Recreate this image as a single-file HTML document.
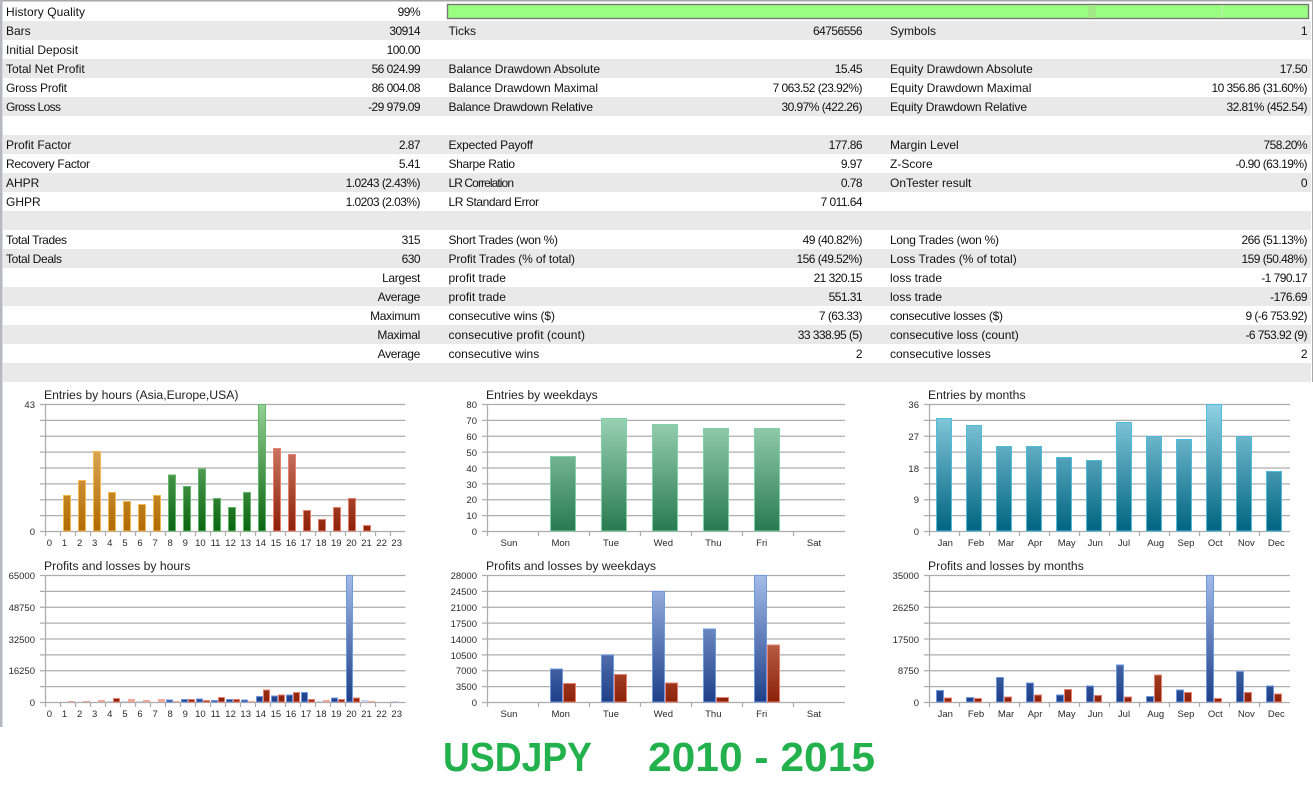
<!DOCTYPE html>
<html><head><meta charset="utf-8"><style>
html,body{margin:0;padding:0;background:#fff;width:1313px;height:798px;overflow:hidden}
svg{display:block;font-family:"Liberation Sans",sans-serif}
.t text{font-size:12px;fill:#111}
.e{text-anchor:end}
.t .e{letter-spacing:-.55px}
.t .w{letter-spacing:-.3px}
.ti{font-size:12.2px;fill:#222}
.l text{font-size:9.5px;fill:#2a2a2a}
.c{text-anchor:middle}
.g{fill:none;stroke:#adadad;stroke-width:1.25}
</style></head><body>
<svg width="1313" height="798" viewBox="0 0 1313 798" xmlns="http://www.w3.org/2000/svg">
<defs>
<linearGradient id="or" gradientUnits="userSpaceOnUse" x1="0" y1="404" x2="0" y2="531"><stop offset="0" stop-color="#f0c888"/><stop offset="1" stop-color="#b06a00"/></linearGradient>
<linearGradient id="gr" gradientUnits="userSpaceOnUse" x1="0" y1="404" x2="0" y2="531"><stop offset="0" stop-color="#96d096"/><stop offset="1" stop-color="#0a6410"/></linearGradient>
<linearGradient id="rd" gradientUnits="userSpaceOnUse" x1="0" y1="404" x2="0" y2="531"><stop offset="0" stop-color="#e8a090"/><stop offset="1" stop-color="#8c2208"/></linearGradient>
<linearGradient id="wk" gradientUnits="userSpaceOnUse" x1="0" y1="404" x2="0" y2="531"><stop offset="0" stop-color="#a8dcc0"/><stop offset="1" stop-color="#287a50"/></linearGradient>
<linearGradient id="te" gradientUnits="userSpaceOnUse" x1="0" y1="404" x2="0" y2="531"><stop offset="0" stop-color="#90d2e4"/><stop offset="1" stop-color="#006480"/></linearGradient>
<linearGradient id="bl" gradientUnits="userSpaceOnUse" x1="0" y1="575" x2="0" y2="702"><stop offset="0" stop-color="#a4bce8"/><stop offset="1" stop-color="#1e3f88"/></linearGradient>
<linearGradient id="rp" gradientUnits="userSpaceOnUse" x1="0" y1="575" x2="0" y2="702"><stop offset="0" stop-color="#e8a090"/><stop offset="1" stop-color="#8c2208"/></linearGradient>
</defs>

<rect x="0" y="0" width="1313" height="1.5" fill="#a8a8a8"/>
<rect x="0" y="0" width="2.5" height="727" fill="#b4b8c0"/>
<rect x="1312" y="0" width="1" height="382" fill="#a8a8a8"/>
<g fill="#e9e9e9">
<rect x="3" y="21" width="1308" height="19"/><rect x="3" y="59" width="1308" height="19"/><rect x="3" y="97" width="1308" height="19"/><rect x="3" y="135" width="1308" height="19"/><rect x="3" y="173" width="1308" height="19"/><rect x="3" y="211" width="1308" height="19"/><rect x="3" y="249" width="1308" height="19"/><rect x="3" y="287" width="1308" height="19"/><rect x="3" y="325" width="1308" height="19"/><rect x="3" y="363" width="1308" height="19"/>
</g>

<rect x="447.5" y="4.5" width="861" height="14" fill="#99ff80" stroke="#777" stroke-width="1.4"/>
<rect x="1088" y="5" width="8" height="13" fill="#a2e884"/>
<rect x="1221.5" y="5" width="1" height="13" fill="#c8e8c0"/>

<g class="t">
<text x="6" y="16" textLength="79">History Quality</text><text class="e" x="420" y="16">99%</text>
<text x="6" y="35">Bars</text><text class="e" x="420" y="35">30914</text><text x="448.5" y="35">Ticks</text><text class="e" x="862" y="35">64756556</text><text x="890" y="35">Symbols</text><text class="e" x="1307" y="35">1</text>
<text x="6" y="54">Initial Deposit</text><text class="e" x="420" y="54">100.00</text>
<text x="6" y="73">Total Net Profit</text><text class="e" x="420" y="73">56 024.99</text><text x="448.5" y="73" textLength="151.5">Balance Drawdown Absolute</text><text class="e" x="862" y="73">15.45</text><text x="890" y="73">Equity Drawdown Absolute</text><text class="e" x="1307" y="73">17.50</text>
<text x="6" y="92" textLength="61">Gross Profit</text><text class="e" x="420" y="92">86 004.08</text><text x="448.5" y="92" textLength="149.5">Balance Drawdown Maximal</text><text class="e" x="862" y="92">7 063.52 (23.92%)</text><text x="890" y="92">Equity Drawdown Maximal</text><text class="e" x="1307" y="92">10 356.86 (31.60%)</text>
<text x="6" y="111" textLength="55">Gross Loss</text><text class="e" x="420" y="111">-29 979.09</text><text x="448.5" y="111" textLength="144.5">Balance Drawdown Relative</text><text class="e" x="862" y="111">30.97% (422.26)</text><text x="890" y="111" textLength="137">Equity Drawdown Relative</text><text class="e" x="1307" y="111">32.81% (452.54)</text>
<text x="6" y="149">Profit Factor</text><text class="e" x="420" y="149">2.87</text><text x="448.5" y="149" textLength="84.5">Expected Payoff</text><text class="e" x="862" y="149">177.86</text><text x="890" y="149">Margin Level</text><text class="e" x="1307" y="149">758.20%</text>
<text x="6" y="168" textLength="84">Recovery Factor</text><text class="e" x="420" y="168">5.41</text><text x="448.5" y="168" textLength="66.5">Sharpe Ratio</text><text class="e" x="862" y="168">9.97</text><text x="890" y="168">Z-Score</text><text class="e" x="1307" y="168">-0.90 (63.19%)</text>
<text x="6" y="187">AHPR</text><text class="e" x="420" y="187">1.0243 (2.43%)</text><text x="448.5" y="187" textLength="65.5">LR Correlation</text><text class="e" x="862" y="187">0.78</text><text x="890" y="187">OnTester result</text><text class="e" x="1307" y="187">0</text>
<text x="6" y="206">GHPR</text><text class="e" x="420" y="206">1.0203 (2.03%)</text><text x="448.5" y="206" textLength="90.5">LR Standard Error</text><text class="e" x="862" y="206">7 011.64</text>
<text x="6" y="244" textLength="61">Total Trades</text><text class="e" x="420" y="244">315</text><text x="448.5" y="244" textLength="109.5">Short Trades (won %)</text><text class="e" x="862" y="244">49 (40.82%)</text><text x="890" y="244" textLength="109">Long Trades (won %)</text><text class="e" x="1307" y="244">266 (51.13%)</text>
<text x="6" y="263" textLength="56">Total Deals</text><text class="e" x="420" y="263">630</text><text x="448.5" y="263" textLength="126.5">Profit Trades (% of total)</text><text class="e" x="862" y="263">156 (49.52%)</text><text x="890" y="263">Loss Trades (% of total)</text><text class="e" x="1307" y="263">159 (50.48%)</text>
<text class="e w" x="420" y="282">Largest</text><text x="448.5" y="282">profit trade</text><text class="e" x="862" y="282">21 320.15</text><text x="890" y="282">loss trade</text><text class="e" x="1307" y="282">-1 790.17</text>
<text class="e w" x="420" y="301">Average</text><text x="448.5" y="301">profit trade</text><text class="e" x="862" y="301">551.31</text><text x="890" y="301">loss trade</text><text class="e" x="1307" y="301">-176.69</text>
<text class="e w" x="420" y="320">Maximum</text><text x="448.5" y="320" textLength="106.5">consecutive wins ($)</text><text class="e" x="862" y="320">7 (63.33)</text><text x="890" y="320" textLength="113">consecutive losses ($)</text><text class="e" x="1307" y="320">9 (-6 753.92)</text>
<text class="e w" x="420" y="339">Maximal</text><text x="448.5" y="339" textLength="136.5">consecutive profit (count)</text><text class="e" x="862" y="339">33 338.95 (5)</text><text x="890" y="339">consecutive loss (count)</text><text class="e" x="1307" y="339">-6 753.92 (9)</text>
<text class="e w" x="420" y="358">Average</text><text x="448.5" y="358">consecutive wins</text><text class="e" x="862" y="358">2</text><text x="890" y="358">consecutive losses</text><text class="e" x="1307" y="358">2</text>
</g>

<!-- Grids -->
<path class="g" d="M40 404.5H405.5M40 420.4H405.5M40 436.25H405.5M40 452.1H405.5M40 468H405.5M40 483.9H405.5M40 499.75H405.5M40 515.6H405.5M40 531.5H405.5M45.5 404V536M60.5 531V536M75.5 531V536M90.5 531V536M105.5 531V536M120.5 531V536M135.5 531V536M150.5 531V536M165.5 531V536M180.5 531V536M195.5 531V536M210.5 531V536M225.5 531V536M240.5 531V536M255.5 531V536M270.5 531V536M285.5 531V536M300.5 531V536M315.5 531V536M330.5 531V536M345.5 531V536M360.5 531V536M375.5 531V536M390.5 531V536"/>
<path class="g" d="M482 404.5H845M482 420.4H845M482 436.25H845M482 452.1H845M482 468H845M482 483.9H845M482 499.75H845M482 515.6H845M482 531.5H845M487.5 404V536M538.5 531V536M589.5 531V536M640.5 531V536M691.5 531V536M742.5 531V536M793.5 531V536"/>
<path class="g" d="M924 404.5H1290M924 420.4H1290M924 436.25H1290M924 452.1H1290M924 468H1290M924 483.9H1290M924 499.75H1290M924 515.6H1290M924 531.5H1290M929.5 404V536M959.5 531V536M989.5 531V536M1019.5 531V536M1049.5 531V536M1079.5 531V536M1109.5 531V536M1139.5 531V536M1169.5 531V536M1199.5 531V536M1229.5 531V536M1259.5 531V536"/>
<path class="g" d="M40 575.5H405.5M40 591.4H405.5M40 607.25H405.5M40 623.1H405.5M40 639H405.5M40 654.9H405.5M40 670.75H405.5M40 686.6H405.5M40 702.5H405.5M45.5 575V707M60.5 702V707M75.5 702V707M90.5 702V707M105.5 702V707M120.5 702V707M135.5 702V707M150.5 702V707M165.5 702V707M180.5 702V707M195.5 702V707M210.5 702V707M225.5 702V707M240.5 702V707M255.5 702V707M270.5 702V707M285.5 702V707M300.5 702V707M315.5 702V707M330.5 702V707M345.5 702V707M360.5 702V707M375.5 702V707M390.5 702V707"/>
<path class="g" d="M482 575.5H845M482 591.4H845M482 607.25H845M482 623.1H845M482 639H845M482 654.9H845M482 670.75H845M482 686.6H845M482 702.5H845M487.5 575V707M538.5 702V707M589.5 702V707M640.5 702V707M691.5 702V707M742.5 702V707M793.5 702V707"/>
<path class="g" d="M924 575.5H1290M924 591.4H1290M924 607.25H1290M924 623.1H1290M924 639H1290M924 654.9H1290M924 670.75H1290M924 686.6H1290M924 702.5H1290M929.5 575V707M959.5 702V707M989.5 702V707M1019.5 702V707M1049.5 702V707M1079.5 702V707M1109.5 702V707M1139.5 702V707M1169.5 702V707M1199.5 702V707M1229.5 702V707M1259.5 702V707"/>

<!-- Bars: Entries by hours -->
<path fill="url(#or)" stroke="#f8b850" d="M63.5 531V495.5h7V531zM78.5 531V480.5h7V531zM93.5 531V451.5h7V531zM108.5 531V492.5h7V531zM123.5 531V501.5h7V531zM138.5 531V504.5h7V531zM153.5 531V495.5h7V531z"/>
<path fill="url(#gr)" stroke="#60b868" d="M168.5 531V475h7V531zM183.5 531V486.5h7V531zM198.5 531V469h7V531zM213.5 531V498.5h7V531zM228.5 531V507.5h7V531zM243.5 531V492.5h7V531zM258.5 531V404.5h7V531z"/>
<path fill="url(#rd)" stroke="#e88070" d="M273.5 531V448.5h7V531zM288.5 531V454.5h7V531zM303.5 531V510.5h7V531zM318.5 531V519.5h7V531zM333.5 531V507.5h7V531zM348.5 531V498.5h7V531zM363.5 531V525.5h7V531z"/>
<!-- Entries by weekdays -->
<path fill="url(#wk)" stroke="#80d0a8" d="M550.5 531V456.5h25V531zM601.5 531V418.5h25V531zM652.5 531V424.5h25V531zM703.5 531V428.5h25V531zM754.5 531V428.5h25V531z"/>
<!-- Entries by months -->
<path fill="url(#te)" stroke="#50bcdc" d="M936.5 531V418.5h15V531zM966.5 531V425.5h15V531zM996.5 531V446.5h15V531zM1026.5 531V446.5h15V531zM1056.5 531V457.5h15V531zM1086.5 531V460.5h15V531zM1116.5 531V422.5h15V531zM1146.5 531V436.5h15V531zM1176.5 531V439.5h15V531zM1206.5 531V404.5h15V531zM1236.5 531V436.5h15V531zM1266.5 531V471.5h15V531z"/>
<!-- P&L by hours: tiny bars -->
<path fill="#c8d6f2" d="M106 701h7v1h-7zM121 701h7v1h-7zM136 701h7v1h-7zM316 701h7v1h-7zM391 701h7v1h-7zM361 700h7v2h-7z"/>
<path fill="#f2a898" d="M68 701h7v1h-7zM83 701h7v1h-7zM98 700h7v2h-7zM173 701h7v1h-7zM248 701h7v1h-7zM368 701h7v1h-7zM143 700h7v2h-7zM158 699h7v3h-7zM323 700h7v2h-7zM128 699h7v3h-7z"/>
<!-- P&L by hours -->
<path fill="url(#bl)" stroke="#7098e0" d="M166.5 702V700h6V702zM181.5 702V699.5h6V702zM196.5 702V699h6V702zM211.5 702V700.5h6V702zM226.5 702V699.5h6V702zM241.5 702V700h6V702zM256.5 702V696.5h6V702zM271.5 702V696h6V702zM286.5 702V695h6V702zM301.5 702V692.5h6V702zM331.5 702V698h6V702zM346.5 702V575.5h6V702z"/>
<path fill="url(#rp)" stroke="#e88070" d="M113.5 702V698.5h6V702zM188.5 702V699.5h6V702zM203.5 702V700.5h6V702zM218.5 702V697.5h6V702zM233.5 702V699.5h6V702zM263.5 702V690h6V702zM278.5 702V695h6V702zM293.5 702V692.5h6V702zM308.5 702V699.5h6V702zM338.5 702V699.5h6V702zM353.5 702V698h6V702z"/>
<!-- P&L by weekdays -->
<path fill="url(#bl)" stroke="#7098e0" d="M550.5 702V669h12V702zM601.5 702V655h12V702zM652.5 702V591.5h12V702zM703.5 702V629h12V702zM754.5 702V575.5h12V702z"/>
<path fill="url(#rp)" stroke="#e88070" d="M563.5 702V683.5h12V702zM614.5 702V674.5h12V702zM665.5 702V683h12V702zM716.5 702V697.5h12V702zM767.5 702V645h12V702z"/>
<!-- P&L by months -->
<path fill="url(#bl)" stroke="#7098e0" d="M936.5 702V690.5h7V702zM966.5 702V697.5h7V702zM996.5 702V677.5h7V702zM1026.5 702V683h7V702zM1056.5 702V695h7V702zM1086.5 702V686h7V702zM1116.5 702V665h7V702zM1146.5 702V696.5h7V702zM1176.5 702V690h7V702zM1206.5 702V575.5h7V702zM1236.5 702V671.5h7V702zM1266.5 702V686h7V702z"/>
<path fill="url(#rp)" stroke="#e88070" d="M944.5 702V698h7V702zM974.5 702V698.5h7V702zM1004.5 702V697h7V702zM1034.5 702V695h7V702zM1064.5 702V689.5h7V702zM1094.5 702V695.5h7V702zM1124.5 702V697h7V702zM1154.5 702V675h7V702zM1184.5 702V692.5h7V702zM1214.5 702V698.5h7V702zM1244.5 702V692.5h7V702zM1274.5 702V694h7V702z"/>

<!-- Titles -->
<text class="ti" x="44" y="399">Entries by hours (Asia,Europe,USA)</text>
<text class="ti" x="486" y="399">Entries by weekdays</text>
<text class="ti" x="928" y="399">Entries by months</text>
<text class="ti" x="44" y="570">Profits and losses by hours</text>
<text class="ti" x="486" y="570">Profits and losses by weekdays</text>
<text class="ti" x="928" y="570">Profits and losses by months</text>

<!-- Y labels -->
<g class="l">
<text class="e" x="35" y="408">43</text><text class="e" x="35" y="535">0</text>
<text class="e" x="477" y="408">80</text><text class="e" x="477" y="424">70</text><text class="e" x="477" y="440">60</text><text class="e" x="477" y="456">50</text><text class="e" x="477" y="472">40</text><text class="e" x="477" y="488">30</text><text class="e" x="477" y="503">20</text><text class="e" x="477" y="519">10</text><text class="e" x="477" y="535">0</text>
<text class="e" x="919" y="408">36</text><text class="e" x="919" y="440">27</text><text class="e" x="919" y="472">18</text><text class="e" x="919" y="503">9</text><text class="e" x="919" y="535">0</text>
<text class="e" x="35" y="579">65000</text><text class="e" x="35" y="611">48750</text><text class="e" x="35" y="643">32500</text><text class="e" x="35" y="674">16250</text><text class="e" x="35" y="706">0</text>
<text class="e" x="477" y="579">28000</text><text class="e" x="477" y="595">24500</text><text class="e" x="477" y="611">21000</text><text class="e" x="477" y="627">17500</text><text class="e" x="477" y="643">14000</text><text class="e" x="477" y="659">10500</text><text class="e" x="477" y="674">7000</text><text class="e" x="477" y="690">3500</text><text class="e" x="477" y="706">0</text>
<text class="e" x="919" y="579">35000</text><text class="e" x="919" y="611">26250</text><text class="e" x="919" y="643">17500</text><text class="e" x="919" y="674">8750</text><text class="e" x="919" y="706">0</text>
</g>

<!-- X labels -->
<g class="l">
<text class="c" y="546" x="49.4">0</text><text class="c" y="546" x="64.5">1</text><text class="c" y="546" x="79.6">2</text><text class="c" y="546" x="94.7">3</text><text class="c" y="546" x="109.8">4</text><text class="c" y="546" x="124.9">5</text><text class="c" y="546" x="140">6</text><text class="c" y="546" x="155.1">7</text><text class="c" y="546" x="170.2">8</text><text class="c" y="546" x="185.3">9</text><text class="c" y="546" x="200.4">10</text><text class="c" y="546" x="215.5">11</text><text class="c" y="546" x="230.6">12</text><text class="c" y="546" x="245.7">13</text><text class="c" y="546" x="260.8">14</text><text class="c" y="546" x="275.9">15</text><text class="c" y="546" x="291">16</text><text class="c" y="546" x="306.1">17</text><text class="c" y="546" x="321.2">18</text><text class="c" y="546" x="336.3">19</text><text class="c" y="546" x="351.4">20</text><text class="c" y="546" x="366.5">21</text><text class="c" y="546" x="381.6">22</text><text class="c" y="546" x="396.7">23</text>
<text class="c" y="717" x="49.4">0</text><text class="c" y="717" x="64.5">1</text><text class="c" y="717" x="79.6">2</text><text class="c" y="717" x="94.7">3</text><text class="c" y="717" x="109.8">4</text><text class="c" y="717" x="124.9">5</text><text class="c" y="717" x="140">6</text><text class="c" y="717" x="155.1">7</text><text class="c" y="717" x="170.2">8</text><text class="c" y="717" x="185.3">9</text><text class="c" y="717" x="200.4">10</text><text class="c" y="717" x="215.5">11</text><text class="c" y="717" x="230.6">12</text><text class="c" y="717" x="245.7">13</text><text class="c" y="717" x="260.8">14</text><text class="c" y="717" x="275.9">15</text><text class="c" y="717" x="291">16</text><text class="c" y="717" x="306.1">17</text><text class="c" y="717" x="321.2">18</text><text class="c" y="717" x="336.3">19</text><text class="c" y="717" x="351.4">20</text><text class="c" y="717" x="366.5">21</text><text class="c" y="717" x="381.6">22</text><text class="c" y="717" x="396.7">23</text>
<text class="c" y="546" x="509">Sun</text><text class="c" y="546" x="560.7">Mon</text><text class="c" y="546" x="611">Tue</text><text class="c" y="546" x="663.3">Wed</text><text class="c" y="546" x="713.3">Thu</text><text class="c" y="546" x="761.7">Fri</text><text class="c" y="546" x="814">Sat</text>
<text class="c" y="717" x="509">Sun</text><text class="c" y="717" x="560.7">Mon</text><text class="c" y="717" x="611">Tue</text><text class="c" y="717" x="663.3">Wed</text><text class="c" y="717" x="713.3">Thu</text><text class="c" y="717" x="761.7">Fri</text><text class="c" y="717" x="814">Sat</text>
<text class="c" y="546" x="945.3">Jan</text><text class="c" y="546" x="976">Feb</text><text class="c" y="546" x="1006">Mar</text><text class="c" y="546" x="1035">Apr</text><text class="c" y="546" x="1066.7">May</text><text class="c" y="546" x="1095.3">Jun</text><text class="c" y="546" x="1124">Jul</text><text class="c" y="546" x="1155.7">Aug</text><text class="c" y="546" x="1186">Sep</text><text class="c" y="546" x="1215.3">Oct</text><text class="c" y="546" x="1246.3">Nov</text><text class="c" y="546" x="1276.3">Dec</text>
<text class="c" y="717" x="945.3">Jan</text><text class="c" y="717" x="976">Feb</text><text class="c" y="717" x="1006">Mar</text><text class="c" y="717" x="1035">Apr</text><text class="c" y="717" x="1066.7">May</text><text class="c" y="717" x="1095.3">Jun</text><text class="c" y="717" x="1124">Jul</text><text class="c" y="717" x="1155.7">Aug</text><text class="c" y="717" x="1186">Sep</text><text class="c" y="717" x="1215.3">Oct</text><text class="c" y="717" x="1246.3">Nov</text><text class="c" y="717" x="1276.3">Dec</text>
</g>

<text x="443" y="771" font-size="41" font-weight="700" fill="#22b14c" textLength="149" lengthAdjust="spacingAndGlyphs">USDJPY</text>
<text x="648" y="771" font-size="41" font-weight="700" fill="#22b14c" textLength="227" lengthAdjust="spacingAndGlyphs">2010 - 2015</text>
</svg>
</body></html>
